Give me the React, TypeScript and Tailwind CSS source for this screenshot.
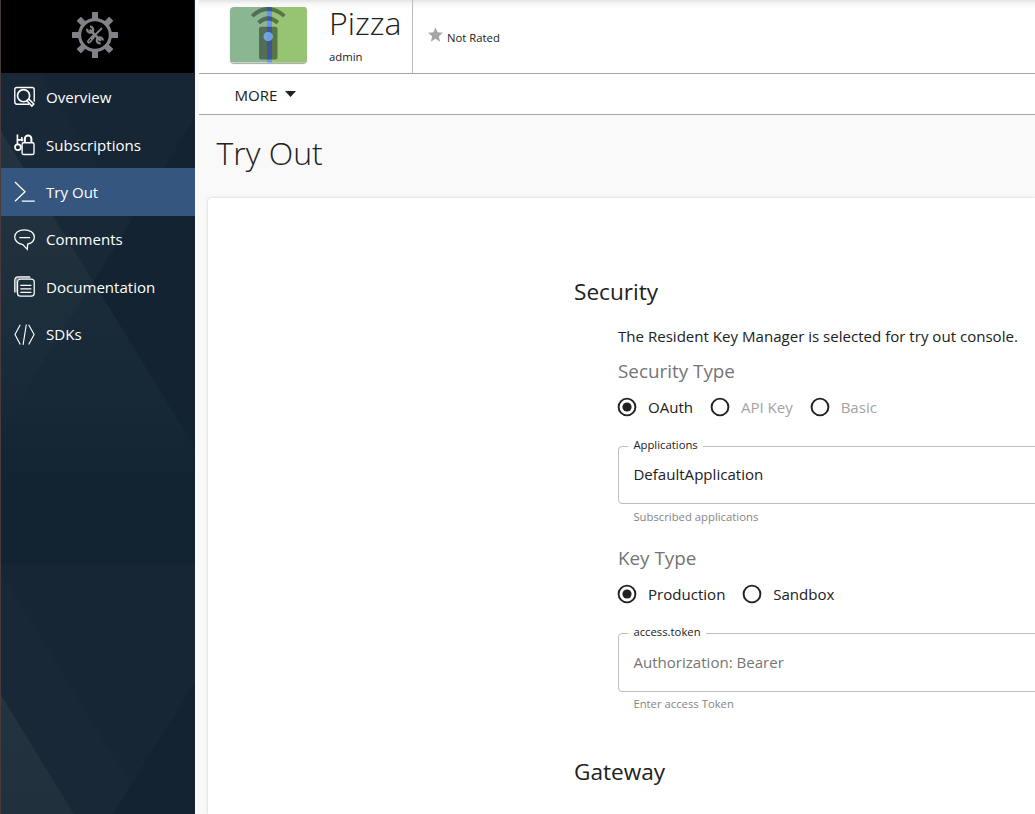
import React from "react";

function SidebarBackdrop() {
  return (
    <svg className="absolute inset-0 h-full w-full" viewBox="0 0 195 814" preserveAspectRatio="none" aria-hidden="true">
      <defs>
        <linearGradient id="fade" x1="0" y1="330" x2="0" y2="500" gradientUnits="userSpaceOnUse">
          <stop offset="0" stopColor="#122331" stopOpacity="0" />
          <stop offset="0.5" stopColor="#122331" stopOpacity="0.25" />
          <stop offset="0.75" stopColor="#122331" stopOpacity="0.75" />
          <stop offset="1" stopColor="#122331" />
        </linearGradient>
        <linearGradient id="teal" x1="0" y1="131" x2="0" y2="450" gradientUnits="userSpaceOnUse">
          <stop offset="0" stopColor="#22343f" />
          <stop offset="0.35" stopColor="#20313d" />
          <stop offset="0.6" stopColor="#1c2d3b" />
          <stop offset="1" stopColor="#182837" />
        </linearGradient>
        <g id="tile">
          <rect width="195" height="564" fill="#162635" />
          <path d="M0 9 L195 326 V564 H0Z" fill="#182836" />
          <path d="M195 118 L0 430 V564 H195Z" fill="#132331" />
          <path d="M0 131 L195 448 V564 H0Z" fill="url(#teal)" />
          <path d="M93 282 L195 448 V564 H0 V430Z" fill="#172736" fillOpacity="0.45" />
          <rect y="330" width="195" height="234" fill="url(#fade)" />
        </g>
      </defs>
      <use href="#tile" />
      <use href="#tile" y="564" />
    </svg>
  );
}

function GearLogo() {
  return (
    <svg className="size-[46px]" viewBox="0 0 46 46" aria-hidden="true">
      <g fill="#828187">
        {[0, 45, 90, 135, 180, 225, 270, 315].map((a) => (
          <rect key={a} x="20" y="0" width="6" height="9" rx="0.5" transform={`rotate(${a} 23 23)`} />
        ))}
      </g>
      <circle cx="23" cy="23" r="15.4" fill="none" stroke="#828187" strokeWidth="3.2" />
      <g stroke="#828187" fill="none" strokeLinecap="round">
        <path d="M18.5 18.5 L28 28" strokeWidth="2.6" />
        <path d="M15.3 16.8 A3 3 0 1 0 18 14.6" strokeWidth="2.3" strokeLinecap="butt" />
        <path d="M30.8 28.5 A3 3 0 1 0 28.6 31.2" strokeWidth="2.3" strokeLinecap="butt" />
        <path d="M29.5 16.5 L21.5 24.5" strokeWidth="1.8" />
        <path d="M21 25 L17 29.5" strokeWidth="4" />
      </g>
      <path d="M19 27 L17 29.5" stroke="#000" strokeWidth="1" />
    </svg>
  );
}

const line = { fill: "none", stroke: "#fff", strokeWidth: 1.4 } as const;

const items = [
  {
    label: "Overview",
    icon: (
      <g {...line} transform="translate(0 .7)">
        <path d="M15.5 18 H3 Q.8 18 .8 15.8 V3 Q.8 .8 3 .8 H18.5 Q20.7 .8 20.7 3 V15.5" />
        <circle cx="9.8" cy="9.2" r="6.2" strokeWidth="1.7" />
        <path d="M13.3 14.6 L18.3 19.8 L20.3 17.8 L15.2 12.7" strokeWidth="1.6" />
      </g>
    ),
  },
  {
    label: "Subscriptions",
    nudge: true,
    icon: (
      <g {...line}>
        <rect x="8.3" y="9" width="12.2" height="12" rx="1.5" />
        <path d="M11.1 9 V4.8 A3.3 3.3 0 0 1 17.8 4.8 V9" strokeWidth="2.1" />
        <path d="M3.5 10.5 V.6 M3.5 6 H9.4 M8 3 V7.5" strokeWidth="1.7" />
        <circle cx="4" cy="13.6" r="3" strokeWidth="1.8" />
      </g>
    ),
  },
  {
    label: "Try Out",
    active: true,
    icon: (
      <g {...line} strokeWidth="1.3">
        <path d="M1 1 L11.3 11 L1 20.8 M8 20.6 H21.3" />
      </g>
    ),
  },
  {
    label: "Comments",
    icon: (
      <g {...line}>
        <path d="M10.5 .8 C16.2 .8 20.8 4 20.8 8.2 C20.8 12 17.8 14.7 14 15.5 L13.6 20.8 L9 15.9 C4.3 15.3 .7 12.3 .7 8.3 C.7 4 5 .8 10.5 .8Z M5.5 8.9 H16.5" strokeWidth="1.3" />
      </g>
    ),
  },
  {
    label: "Documentation",
    icon: (
      <g {...line} strokeWidth="1.3">
        <rect x="3.6" y="3.2" width="17.1" height="17.5" rx="3" />
        <path d="M.8 17 V4.5 Q.8 .8 4.5 .8 H16.5" />
        <path d="M2.3 17 V5 Q2.3 2 5.3 2 H17" strokeOpacity=".5" />
        <path d="M6.5 9.5 H17.8 M6.5 13.2 H17.8 M6.5 16.7 H17.8" />
      </g>
    ),
  },
  {
    label: "SDKs",
    icon: (
      <g {...line} strokeWidth="1.15">
        <path d="M6.4 .7 L1 10.8 L6.4 21 M15 .7 L20.6 10.8 L15 21 M12.6 .5 L9.3 21.3" />
      </g>
    ),
  },
];

function Sidebar() {
  return (
    <aside className="relative h-full w-[195px] shrink-0 border-l border-[#4a3a3b]">
      <SidebarBackdrop />
      <div className="relative flex h-full flex-col">
        <div className="mr-px flex h-[73px] items-center justify-center bg-black pb-[3px] pr-[5px]">
          <GearLogo />
        </div>
        <nav className="flex flex-col">
          {items.map((it) => (
            <a
              key={it.label}
              className={`flex h-[47.5px] items-center pl-[13px] text-[15.07px] text-white ${it.active ? "bg-[#34567f]" : ""}`}
            >
              <svg className="mr-[11px] size-[21px] overflow-visible" viewBox="0 0 21.5 21.5">{it.icon}</svg>
              <span className={`leading-5 ${it.nudge ? "pt-[1.5px]" : ""}`}>{it.label}</span>
            </a>
          ))}
        </nav>
      </div>
    </aside>
  );
}

function Thumbnail() {
  return (
    <svg className="h-[55.5px] w-[77px] rounded-[4px] shadow-[0_1px_1px_rgba(0,0,0,0.35)]" viewBox="0 0 77 56" preserveAspectRatio="none">
      <rect width="77" height="56" fill="#8ab692" />
      <rect x="40" width="37" height="56" fill="#97c473" />
      <rect x="37" width="5" height="56" fill="#6593f4" />
      <g fill="#000" fillOpacity=".4">
        <path fillRule="evenodd" d="M31 20 H45.5 Q47.5 20 47.5 22 V51 Q47.5 53 45.5 53 H31 Q29 53 29 51 V22 Q29 20 31 20Z M38.2 25.2 A4.6 4.6 0 1 0 38.2 34.4 A4.6 4.6 0 1 0 38.2 25.2Z" />
      </g>
      <g fill="none" stroke="#000" strokeOpacity=".4" strokeWidth="4">
        <path d="M28.6 15.8 Q38.2 7.2 47.8 15.8" />
        <path d="M22.2 9.2 Q38.2 -5.2 54.3 9.2" />
      </g>
      <circle cx="38.2" cy="29.8" r="4.6" fill="#69a2ea" fillOpacity=".75" />
    </svg>
  );
}

function Header() {
  return (
    <header className="ml-1 bg-white">
      <div className="flex h-[74px] border-b border-[#a9a9a9] bg-[linear-gradient(#e4e4e4,#f8f8f8_4px,#fff_10px)]">
        <div className="flex w-[214px] shrink-0 items-start border-r border-[#bdbdbd] pl-[31px] pt-[7px]">
          <Thumbnail />
          <div className="-mt-[8px] ml-[22px] flex flex-col">
            <h1 className="h-[49px] text-[32px] font-light leading-[48px]">Pizza</h1>
            <span className="text-[11.3px] leading-[18px]">admin</span>
          </div>
        </div>
        <div className="flex h-[75px] items-center pl-[15px]">
          <svg className="-mt-[6px] size-[15px]" viewBox="2 2 20 19" fill="#a6a6a6">
            <path d="M12 17.27 18.18 21l-1.64-7.03L22 9.24l-7.19-.61L12 2 9.19 8.63 2 9.24l5.46 4.73L5.82 21z" />
          </svg>
          <span className="ml-[4px] text-[11.3px] leading-4">Not Rated</span>
        </div>
      </div>
      <div className="flex h-[41px] items-center border-b border-[#a9a9a9] pl-[35.4px]">
        <span className="mt-0.5 text-[15.07px] leading-5">MORE</span>
        <svg className="-mt-px ml-2 h-[6px] w-[11px]" viewBox="0 0 11 6"><path d="M0 0H11L5.5 6Z" fill="#212121" /></svg>
      </div>
    </header>
  );
}

function Radio({ label, checked, muted }: { label: string; checked?: boolean; muted?: boolean }) {
  return (
    <label className="flex h-10 items-center">
      <svg className="-mt-px size-[19px] overflow-visible" viewBox="0 0 19 19">
        <circle cx="9" cy="10" r="8.4" fill="none" stroke="#212121" strokeWidth="1.9" />
        {checked && <circle cx="9" cy="10" r="4.6" fill="#212121" />}
      </svg>
      <span className={`ml-[11px] text-[15.07px] leading-6 ${muted ? "text-[#a3a3a3]" : ""}`}>{label}</span>
    </label>
  );
}

function Field({ label, value, hint, placeholder }: { label: string; value: string; hint: string; placeholder?: boolean }) {
  return (
    <div>
      <fieldset className={`rounded-[4px] border border-[#bdbdbd] pl-[9.4px] ${placeholder ? "h-[67px]" : "h-[66px]"}`}>
        <legend className="h-4 px-[5px] text-[11.3px] leading-[14px]">{label}</legend>
        <div className={`ml-[5px] text-[15.07px] leading-6 ${placeholder ? "mt-[9px] text-[#757575]" : "mt-[8px]"}`}>{value}</div>
      </fieldset>
      <p className={`pl-[15.4px] text-[11.3px] leading-[18px] text-[#858585] ${placeholder ? "mt-[3px]" : "mt-[4px]"}`}>{hint}</p>
    </div>
  );
}

export default function App() {
  return (
    <div className="flex h-[814px] w-[1035px] overflow-hidden bg-[#f9f9f9] font-['Open_Sans',sans-serif] text-[#212121]">
      <Sidebar />
      <main className="flex min-w-0 flex-1 flex-col">
        <Header />
        <h2 className="h-[83px] pl-[21.5px] pt-[14px] text-[32px] font-light leading-[48px]">Try Out</h2>
        <section className="ml-[13px] flex-1 overflow-hidden rounded-tl-[4px] bg-white shadow-[0_0_3px_rgba(0,0,0,0.2)]">
          <div className="w-[1200px] pl-[366px] pt-[77px]">
            <h3 className="h-[34px] text-[22.6px] leading-[34px]">Security</h3>
            <div className="pl-[44px]">
              <p className="mt-[15px] text-[15.07px] leading-6">The Resident Key Manager is selected for try out console.</p>
              <h4 className="mt-[9px] text-[18.85px] leading-7 text-[#757575]">Security Type</h4>
              <div className="mt-[2px] flex gap-[17.8px]">
                <Radio label="OAuth" checked />
                <Radio label="API Key" muted />
                <Radio label="Basic" muted />
              </div>
              <div className="mt-[11px]">
                <Field label="Applications" value="DefaultApplication" hint="Subscribed applications" />
              </div>
              <h4 className="mt-[18px] text-[18.85px] leading-7 text-[#757575]">Key Type</h4>
              <div className="mt-[2px] flex gap-[17.8px]">
                <Radio label="Production" checked />
                <Radio label="Sandbox" />
              </div>
              <div className="mt-[11px]">
                <Field label="access.token" value="Authorization: Bearer" hint="Enter access Token" placeholder />
              </div>
            </div>
            <h3 className="mt-[42px] text-[22.6px] leading-[34px]">Gateway</h3>
          </div>
        </section>
      </main>
    </div>
  );
}
